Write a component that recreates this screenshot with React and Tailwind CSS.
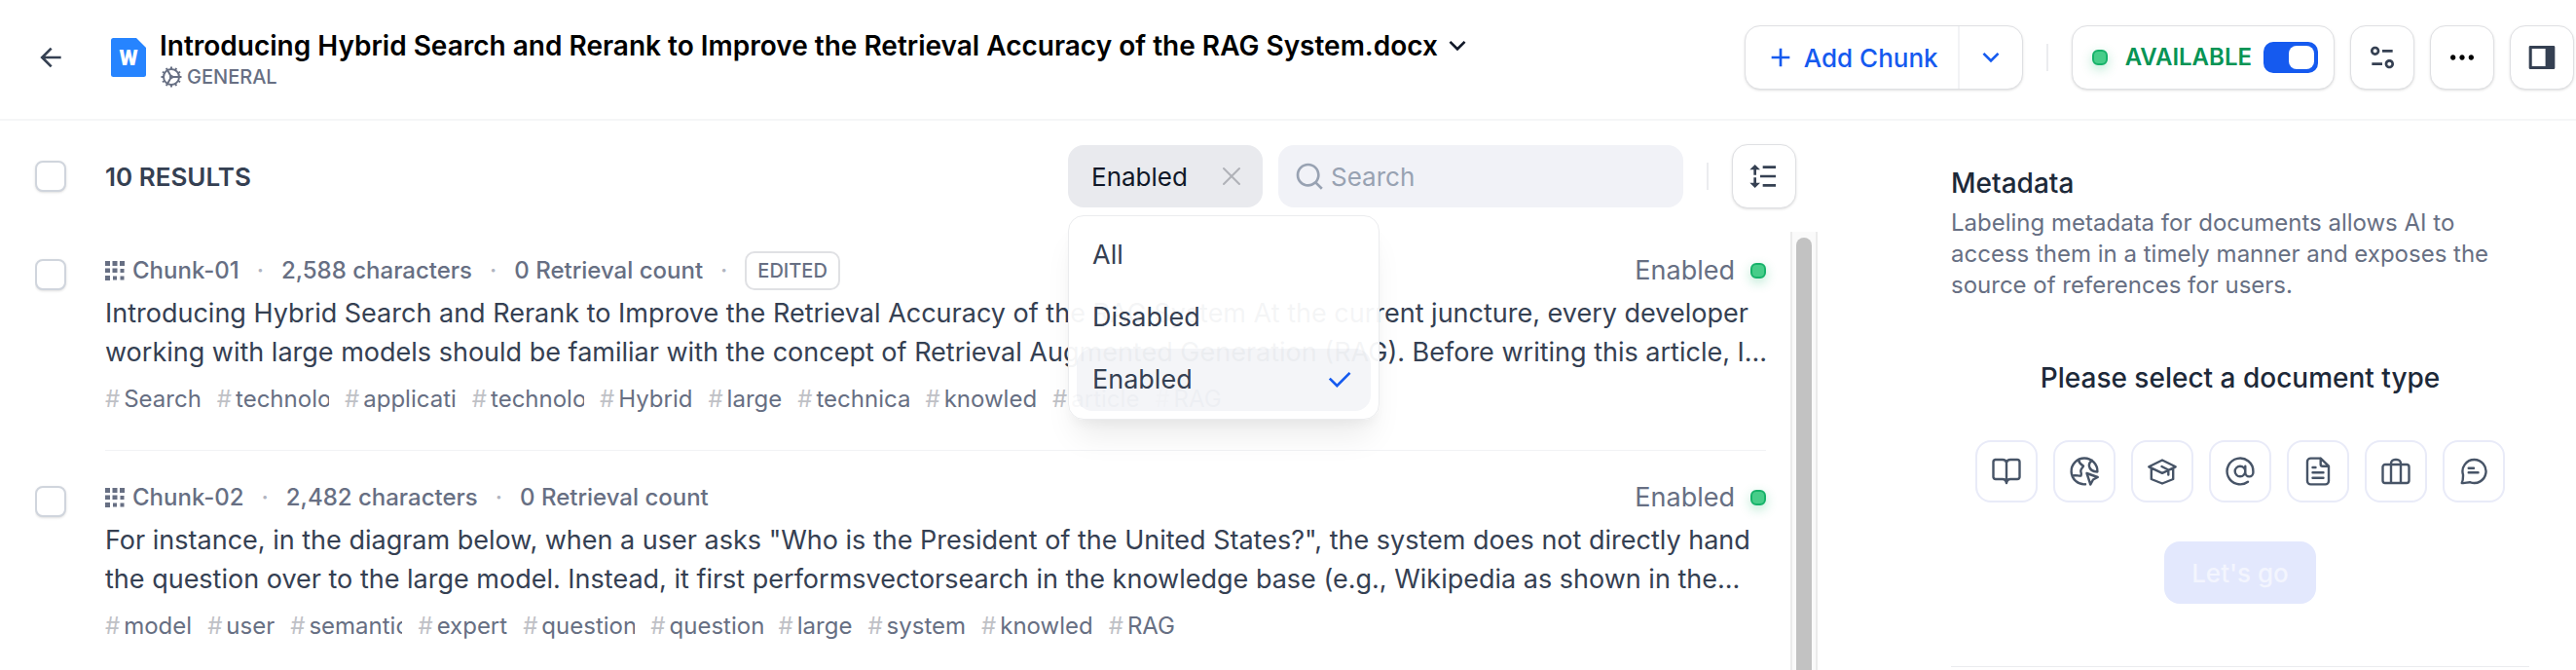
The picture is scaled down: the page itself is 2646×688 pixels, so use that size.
import React from "react";
import {
  RiArrowLeftLine, RiAddLine, RiArrowDownSLine, RiEqualizer2Line, RiMoreFill,
  RiLineHeight, RiSearchLine, RiCheckLine,
} from "react-icons/ri";

const CHUNKS = [
  {
    id: "Chunk-01",
    chars: "2,588 characters",
    edited: true,
    text: "Introducing Hybrid Search and Rerank to Improve the Retrieval Accuracy of the RAG System At the current juncture, every developer working with large models should be familiar with the concept of Retrieval Augmented Generation (RAG). Before writing this article, I...",
    tags: ["Search", "technolo", "applicati", "technolo", "Hybrid", "large", "technica", "knowled", "article", "RAG"],
  },
  {
    id: "Chunk-02",
    chars: "2,482 characters",
    edited: false,
    text: "For instance, in the diagram below, when a user asks \"Who is the President of the United States?\", the system does not directly hand the question over to the large model. Instead, it first performsvectorsearch in the knowledge base (e.g., Wikipedia as shown in the...",
    tags: ["model", "user", "semantic", "expert", "question", "question", "large", "system", "knowled", "RAG"],
  },
];

const ICON_BTN = "flex size-[66px] shrink-0 items-center justify-center rounded-2xl border border-[#dfe0e3] bg-white text-[#354052] shadow-sm";

function Checkbox({ label, className = "" }) {
  return (
    <input
      type="checkbox"
      aria-label={label}
      className={`size-8 shrink-0 appearance-none rounded-lg border-2 border-[#d0d5dd] bg-white shadow-sm ${className}`}
    />
  );
}

function Dot() {
  return <span className="size-4 shrink-0 rounded-md border-2 border-[#17b26a] bg-[#47cd89] shadow-[0_4px_12px_rgba(23,178,106,0.3)]" />;
}

function GearIcon() {
  return (
    <svg viewBox="0 0 24 24" className="size-6" fill="none" stroke="currentColor" strokeWidth="2">
      <circle cx="12" cy="12" r="8" />
      <circle cx="12" cy="12" r="2" fill="currentColor" stroke="none" />
      <path d="M12 12H20M12 12L8 5.100M12 12L8 18.900" />
      <path d="M12 1.500V4M12 20V22.500M1.500 12H4M20 12H22.500M6.750 2.900L8 5.100M17.250 2.900L16 5.100M6.750 21.100L8 18.900M17.250 21.100L16 18.900M2.900 6.750L5.100 8M21.100 6.750L18.900 8M2.900 17.250L5.100 16M21.100 17.250L18.900 16" />
    </svg>
  );
}

function WordIcon() {
  return (
    <svg viewBox="0 0 36 40" className="h-10 w-9 shrink-0">
      <path d="M2.500 0H26L36 10V37.500Q36 40 33.500 40H2.500Q0 40 0 37.500V2.500Q0 0 2.500 0Z" fill="#2684ff" />
      <text x="18" y="28" textAnchor="middle" fontFamily="Roboto, sans-serif" fontSize="22" fontWeight="900" fill="#fff">W</text>
    </svg>
  );
}

function ChunkIcon() {
  return (
    <svg viewBox="0 0 20 20" className="size-5 shrink-0" fill="currentColor">
      <path d="M0 0h5v5H0zM7.500 0h5v5h-5zM15 0h5v5h-5zM0 7.500h5v4.500H0zM7.500 7.500h5v4.500h-5zM15.500 8h4v4h-4zM0 15h5v5H0zM8 15.500h4v4H8zM15.500 15.500h4v4h-4z" />
    </svg>
  );
}

function CloseIcon() {
  return (
    <svg viewBox="0 0 24 24" className="size-6" fill="none" stroke="currentColor" strokeWidth="2" strokeLinecap="round">
      <path d="M4 4L20 20M20 4L4 20" />
    </svg>
  );
}

function PanelIcon() {
  return (
    <svg viewBox="0 0 24 24" className="size-8" fill="currentColor" fillRule="evenodd">
      <path d="M3 3H21A1 1 0 0 1 22 4V20A1 1 0 0 1 21 21H3A1 1 0 0 1 2 20V4A1 1 0 0 1 3 3ZM4.300 5.200V18.800H14.700V5.200Z" />
    </svg>
  );
}

const DOC_TYPES = [
  { name: "Book", d: "M16 27.500V7M16 7C15.500 4.800 14 4 12 4H4.500A2.500 2.500 0 0 0 2.500 6.500V22A2.500 2.500 0 0 0 5 24H12C14.500 24 15.500 25 16 28C16.500 25 17.500 24 20 24H27A2.500 2.500 0 0 0 29.500 22V6.500A2.500 2.500 0 0 0 27 4H20C18 4 16.500 4.800 16 7" },
  { name: "Web page", d: "M17 29.300A13.400 13.400 0 1 1 29.400 16.500M10 4.200C10.500 7.500 12 8.500 15 10.500C14.500 12.500 12.300 13 12.300 15.500C12.300 17.500 13.500 18.500 12.500 20.500C10 21 8 19.500 3.500 20.500M24 4.800C21.500 6.500 20.700 8.500 20.900 10.500C21.500 14 24.500 16.300 29.300 16.500M18.500 18L29.700 22L25 24.500L22.300 29.500Z" },
  { name: "Paper", d: "M16 4.500L29.700 11.300L16 17.900L2.300 11.300ZM4.800 13V24L16 28.500L27.200 24V13M15.500 11L22.300 14.500V19.500" },
  { name: "Social media post", d: "M21.300 10.700V17.300A4 4 0 0 0 29.400 17.300V16A13.400 13.400 0 1 0 24 26.700M21.300 16A5.300 5.300 0 1 1 10.700 16A5.300 5.300 0 1 1 21.300 16" },
  { name: "Personal document", d: "M18.700 2.600H8.500A3.500 3.500 0 0 0 5 6.100V26A3.500 3.500 0 0 0 8.500 29.400H23.500A3.500 3.500 0 0 0 27 26V10.700ZM18.700 2.600V8.700A2 2 0 0 0 20.700 10.700H27M18.700 2.600L27 10.700M10.500 12H13.500M10.500 17.300H21.500M10.500 22.700H21.500" },
  { name: "Business document", d: "M5 9H27A2.500 2.500 0 0 1 29.500 11.500V25.500A2.500 2.500 0 0 1 27 28H5A2.500 2.500 0 0 1 2.500 25.500V11.500A2.500 2.500 0 0 1 5 9ZM11 28V8A4 4 0 0 1 15 4H17A4 4 0 0 1 21 8V28" },
  { name: "Chat record", d: "M16.500 4A12 12 0 1 1 12.500 27.300C9.500 27 7.500 28.500 3.700 28C5.200 25.500 5 22.500 5 19.500A12 12 0 0 1 16.500 4ZM10.700 12.700H16M10.700 17.300H20.500" },
];

function Separator() {
  return <span className="mx-[18px] text-[#b0b4bf]">·</span>;
}

function Chunk({ chunk }) {
  return (
    <article className="flex gap-10">
      <Checkbox label={`Select ${chunk.id}`} className="mt-2" />
      <div className="min-w-0 flex-1">
        <div className="flex h-10 items-center text-2xl font-medium text-[#676f83]">
          <div className="flex items-center gap-2"><ChunkIcon /><span>{chunk.id}</span></div>
          <Separator />
          <span>{chunk.chars}</span>
          <Separator />
          <span>0 Retrieval count</span>
          {chunk.edited && (
            <>
              <Separator />
              <span className="flex h-10 items-center rounded-[10px] border-2 border-[#e0e1e4] px-[11px] text-xl">EDITED</span>
            </>
          )}
          <span className="mr-[25px] ml-auto flex items-center gap-4 text-[27px] font-normal">Enabled<Dot /></span>
        </div>
        <p className="mt-1 mr-2 line-clamp-2 text-[27px] leading-10 text-[#354052]">{chunk.text}</p>
        <ul className="mt-3 flex h-8 items-center gap-4 text-2xl text-[#676f83]">
          {chunk.tags.map((tag, i) => (
            <li key={i} className="flex gap-1">
              <span className="text-[#bfc1c6]">#</span>
              <span className="max-w-24 overflow-hidden whitespace-nowrap">{tag}</span>
            </li>
          ))}
        </ul>
      </div>
    </article>
  );
}

export default function App() {
  return (
    <div className="flex h-screen flex-col overflow-hidden bg-white font-['Inter',sans-serif]">
      <header className="flex h-[124px] shrink-0 items-center border-b-2 border-[#f5f6f7] pr-0.5 pb-1 pl-9">
        <button type="button" aria-label="Back" className="text-[#354052]"><RiArrowLeftLine className="size-8" /></button>
        <div className="ml-[46px] flex items-center gap-3.5">
          <WordIcon />
          <div className="pt-1">
            <div className="flex h-9 items-center gap-1">
              <h1 className="text-[28px] font-semibold text-black">Introducing Hybrid Search and Rerank to Improve the Retrieval Accuracy of the RAG System.docx</h1>
              <button type="button" aria-label="Switch document" className="text-[#101828]"><RiArrowDownSLine className="size-8" /></button>
            </div>
            <div className="flex h-7 items-center gap-1 text-xl font-medium text-[#676f83]"><GearIcon />GENERAL</div>
          </div>
        </div>
        <div className="ml-auto flex items-center gap-4">
          <div className="flex h-[66px] items-stretch rounded-2xl border border-[#dfe0e3] bg-white text-[#155aef] shadow-sm">
            <button type="button" className="flex items-center gap-2 border-r-2 border-[#f2f3f5] px-5 text-[26px] font-medium"><RiAddLine className="size-8" />Add Chunk</button>
            <button type="button" aria-label="More ways to add" className="px-4"><RiArrowDownSLine className="size-8" /></button>
          </div>
          <div className="mx-2 h-7 w-0.5 bg-[#ebecef]" />
          <label className="flex h-[66px] items-center rounded-2xl border border-[#dfe0e3] bg-white pr-4 pl-5 text-2xl font-semibold text-[#079455] shadow-sm">
            <Dot />
            <span className="mr-3 ml-[18px]">AVAILABLE</span>
            <input
              type="checkbox"
              role="switch"
              defaultChecked
              className="flex h-8 w-14 appearance-none items-center justify-end rounded-[10px] bg-[#155aef] px-1 before:block before:h-6 before:w-[26px] before:rounded-lg before:bg-white before:content-['']"
            />
          </label>
          <button type="button" aria-label="Settings" className={ICON_BTN}><RiEqualizer2Line className="size-8" /></button>
          <button type="button" aria-label="More" className={ICON_BTN}><RiMoreFill className="size-8 text-black" /></button>
          <button type="button" aria-label="Toggle panel" className={ICON_BTN}><PanelIcon /></button>
        </div>
      </header>

      <div className="flex min-h-0 flex-1">
        <main className="flex min-w-0 flex-1 flex-col pt-6 pl-9">
          <div className="mb-6 flex items-center pr-[22px]">
            <Checkbox label="Select all" />
            <h2 className="ml-10 text-[26px] font-semibold text-[#354052]">10 RESULTS</h2>
            <div className="relative ml-auto">
              <div className="flex h-16 w-[200px] items-center justify-between rounded-2xl bg-[#e9eaee] pr-5 pl-6">
                <button type="button" aria-haspopup="listbox" aria-expanded="true" className="text-[26px] text-[#101828]">Enabled</button>
                <button type="button" aria-label="Clear filter" className="text-[#b0b2b8]"><CloseIcon /></button>
              </div>
              <ul role="listbox" aria-label="Status" className="absolute top-full left-0 z-10 mt-2 w-80 rounded-2xl border border-[#ebecee] bg-white/95 p-2 text-[27px] text-[#354052] shadow-[0_24px_32px_-8px_rgba(9,9,11,0.08),0_8px_12px_-4px_rgba(9,9,11,0.04)]">
                <li role="option" aria-selected="false" className="flex h-16 items-center px-4">All</li>
                <li role="option" aria-selected="false" className="flex h-16 items-center px-4">Disabled</li>
                <li role="option" aria-selected="true" className="flex h-16 items-center justify-between rounded-2xl bg-[#c8ceda]/20 px-4">Enabled<RiCheckLine className="size-8 text-[#155aef]" /></li>
              </ul>
            </div>
            <label className="ml-4 flex h-16 w-[416px] items-center gap-1.5 rounded-2xl bg-[#f1f2f7] px-4 text-[#98a2b2]">
              <RiSearchLine className="size-8 shrink-0" />
              <input type="text" aria-label="Search" placeholder="Search" className="min-w-0 flex-1 bg-transparent text-[26px] outline-none placeholder:text-[#98a2b2]" />
            </label>
            <div className="mx-6 h-7 w-0.5 bg-[#ebecef]" />
            <button type="button" aria-label="Collapse chunks" className={ICON_BTN}><RiLineHeight className="size-8" /></button>
          </div>

          <div className="flex min-h-0 flex-1">
            <div className="min-w-0 flex-1 overflow-hidden pt-5">
              <Chunk chunk={CHUNKS[0]} />
              <hr className="mt-9 mr-[25px] mb-7 ml-[72px] border-[#f2f3f5]" />
              <Chunk chunk={CHUNKS[1]} />
            </div>
            <div className="w-7 shrink-0 overflow-hidden border-x-2 border-[#ebebeb] bg-[#fafafa] px-1 pt-1.5">
              <div className="h-full rounded-t-full bg-[#c2c2c2]" />
            </div>
          </div>
        </main>

        <aside className="w-[779px] shrink-0 pt-[46px] pr-12 pl-[137px]">
          <h2 className="text-[28px] leading-9 font-medium text-[#1d2939]">Metadata</h2>
          <p className="mt-[7px] text-2xl leading-8 text-[#676f83]">Labeling metadata for documents allows AI to access them in a timely manner and exposes the source of references for users.</p>
          <h3 className="mt-[61px] text-center text-[28px] leading-9 font-medium text-[#1d2939]">Please select a document type</h3>
          <div className="mt-[46px] flex justify-center gap-4">
            {DOC_TYPES.map((t) => (
              <button key={t.name} type="button" aria-label={t.name} className="flex size-16 items-center justify-center rounded-2xl border-2 border-[#e9ebf8] text-[#475467]">
                <svg viewBox="0 0 32 32" className="size-8 shrink-0" fill="none" stroke="currentColor" strokeWidth="2.400" strokeLinecap="round" strokeLinejoin="round"><path d={t.d} /></svg>
              </button>
            ))}
          </div>
          <button type="button" disabled className="mx-auto mt-10 block h-16 rounded-2xl bg-[#e3e8fd] px-7 text-[26px] font-medium text-[#f3f5fe]">Let's go</button>
          <hr className="mt-16 border-[#ebecef]" />
        </aside>
      </div>
    </div>
  );
}
